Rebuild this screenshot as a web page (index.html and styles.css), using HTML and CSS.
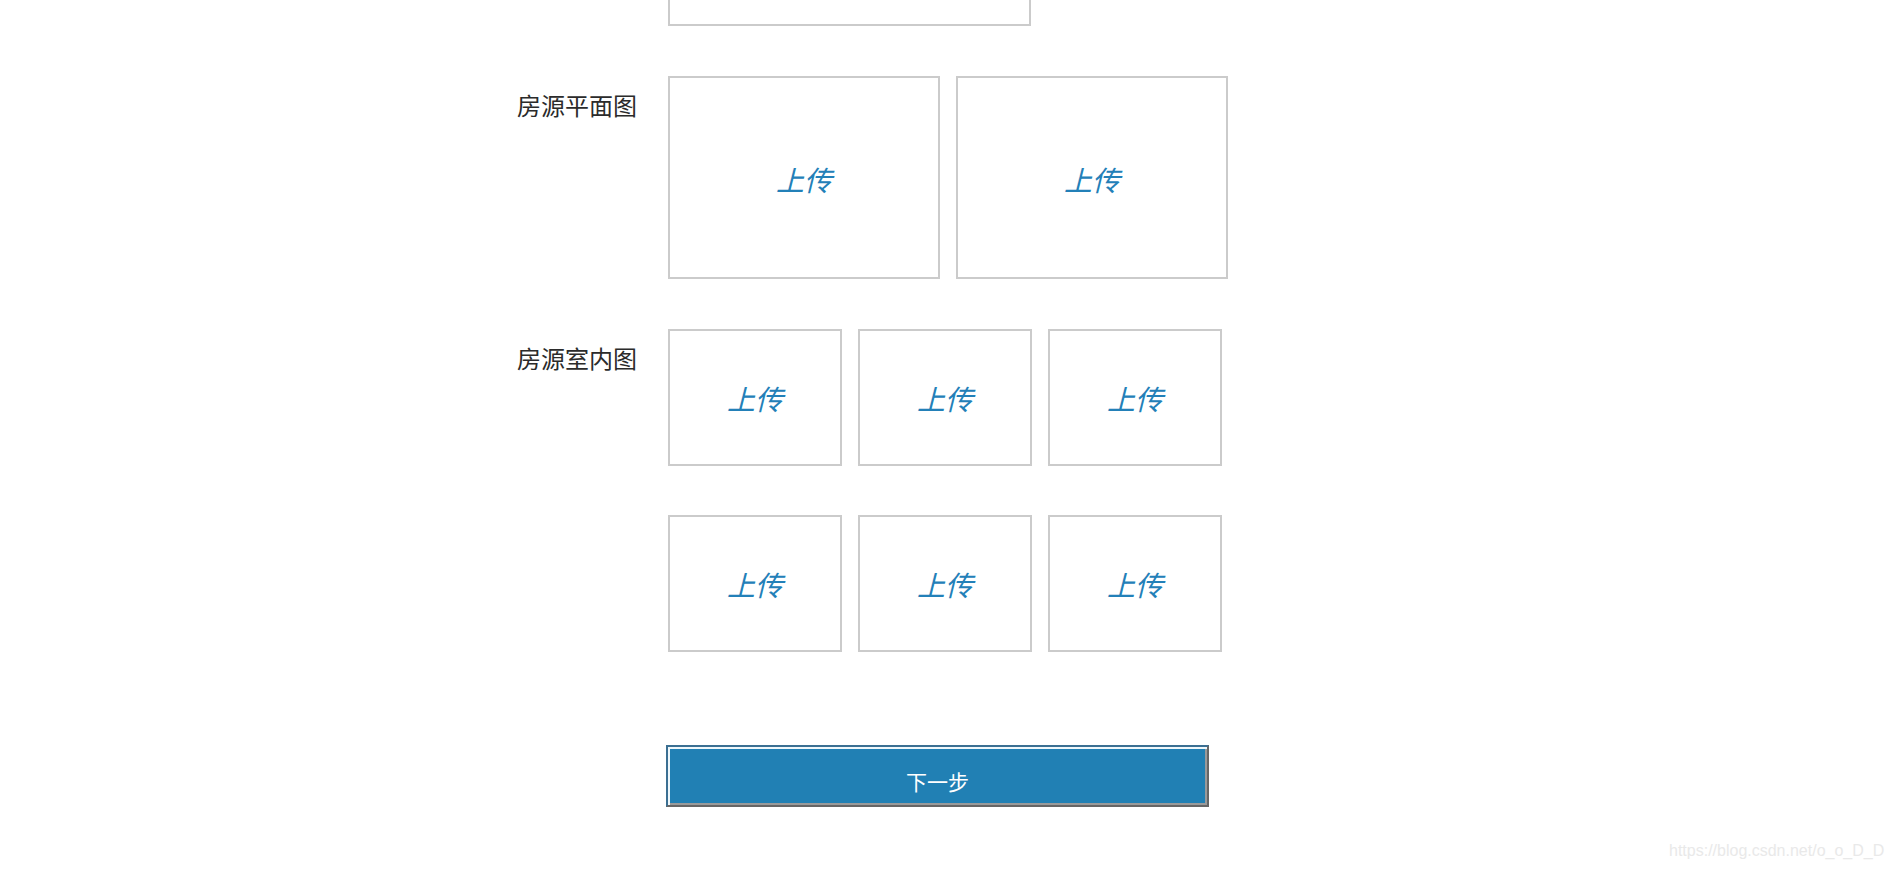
FILE: index.html
```html
<!DOCTYPE html>
<html lang="zh-CN">
<head>
<meta charset="utf-8">
<title>房源图片</title>
<link rel="stylesheet" href="styles.css">
</head>
<body>
<div class="form">
  <div class="row row-top">
    <div class="label"></div>
    <div class="uploads">
      <div class="box box-top"></div>
    </div>
  </div>
  <div class="row row-plan">
    <div class="label">房源平面图</div>
    <div class="uploads uploads-two">
      <div class="box box-big"><span class="up">上传</span></div>
      <div class="box box-big"><span class="up">上传</span></div>
    </div>
  </div>
  <div class="row row-indoor">
    <div class="label">房源室内图</div>
    <div class="uploads uploads-three">
      <div class="box box-small"><span class="up">上传</span></div>
      <div class="box box-small"><span class="up">上传</span></div>
      <div class="box box-small"><span class="up">上传</span></div>
      <div class="box box-small"><span class="up">上传</span></div>
      <div class="box box-small"><span class="up">上传</span></div>
      <div class="box box-small"><span class="up">上传</span></div>
    </div>
  </div>
  <div class="actions">
    <button class="next" type="button">下一步</button>
  </div>
</div>
<div class="watermark">https://blog.csdn.net/o_o_D_D</div>
</body>
</html>
```
FILE: styles.css
```css
html, body {
  margin: 0;
  padding: 0;
  background: #ffffff;
  overflow: hidden;
}
body {
  width: 1890px;
  height: 871px;
  position: relative;
  font-family: "Noto Sans CJK SC", "Noto Sans", sans-serif;
  color: #333333;
}
.form {
  padding-left: 517px;
  display: flex;
  flex-direction: column;
}
.row {
  display: flex;
  align-items: flex-start;
}
.row-top {
  margin-top: -174px;
}
.row-plan {
  margin-top: 50px;
}
.row-indoor {
  margin-top: 50px;
}
.label {
  width: 151px;
  flex: none;
  font-size: 24px;
  line-height: 36px;
  padding-top: 11px;
  color: #2b2b2b;
  white-space: nowrap;
}
.uploads {
  display: flex;
}
.uploads-two {
  gap: 16px;
}
.uploads-three {
  display: grid;
  grid-template-columns: repeat(3, 174px);
  column-gap: 16px;
  row-gap: 49px;
}
.box {
  box-sizing: border-box;
  border: 2px solid #cbcbcb;
  background: #ffffff;
  display: flex;
  align-items: center;
  justify-content: center;
}
.box-top {
  width: 363px;
  height: 200px;
}
.box-big {
  width: 272px;
  height: 203px;
  padding-top: 3px;
}
.box-small {
  height: 137px;
}
.up {
  font-size: 28px;
  line-height: 34px;
  font-style: italic;
  color: #2380b8;
}
.actions {
  padding-left: 149px;
  margin-top: 93px;
}
.next {
  box-sizing: border-box;
  width: 543px;
  height: 62px;
  margin: 0;
  padding: 10px 0 0 0;
  background: #2180b4;
  color: #ffffff;
  font-family: "Noto Sans CJK SC", "Noto Sans", sans-serif;
  font-size: 21px;
  line-height: 1;
  border-style: solid;
  border-width: 2px;
  border-color: #3b6f92 #666666 #666666 #3b6f92;
  box-shadow: inset 2px 2px 0 #eef7fb, inset -2px -2px 0 #9a9a9a;
  appearance: none;
}
.watermark {
  position: absolute;
  left: 1669px;
  top: 841px;
  font-family: "Liberation Sans", Arial, sans-serif;
  font-size: 16px;
  line-height: 20px;
  color: #e9e9e9;
  white-space: nowrap;
}
```
